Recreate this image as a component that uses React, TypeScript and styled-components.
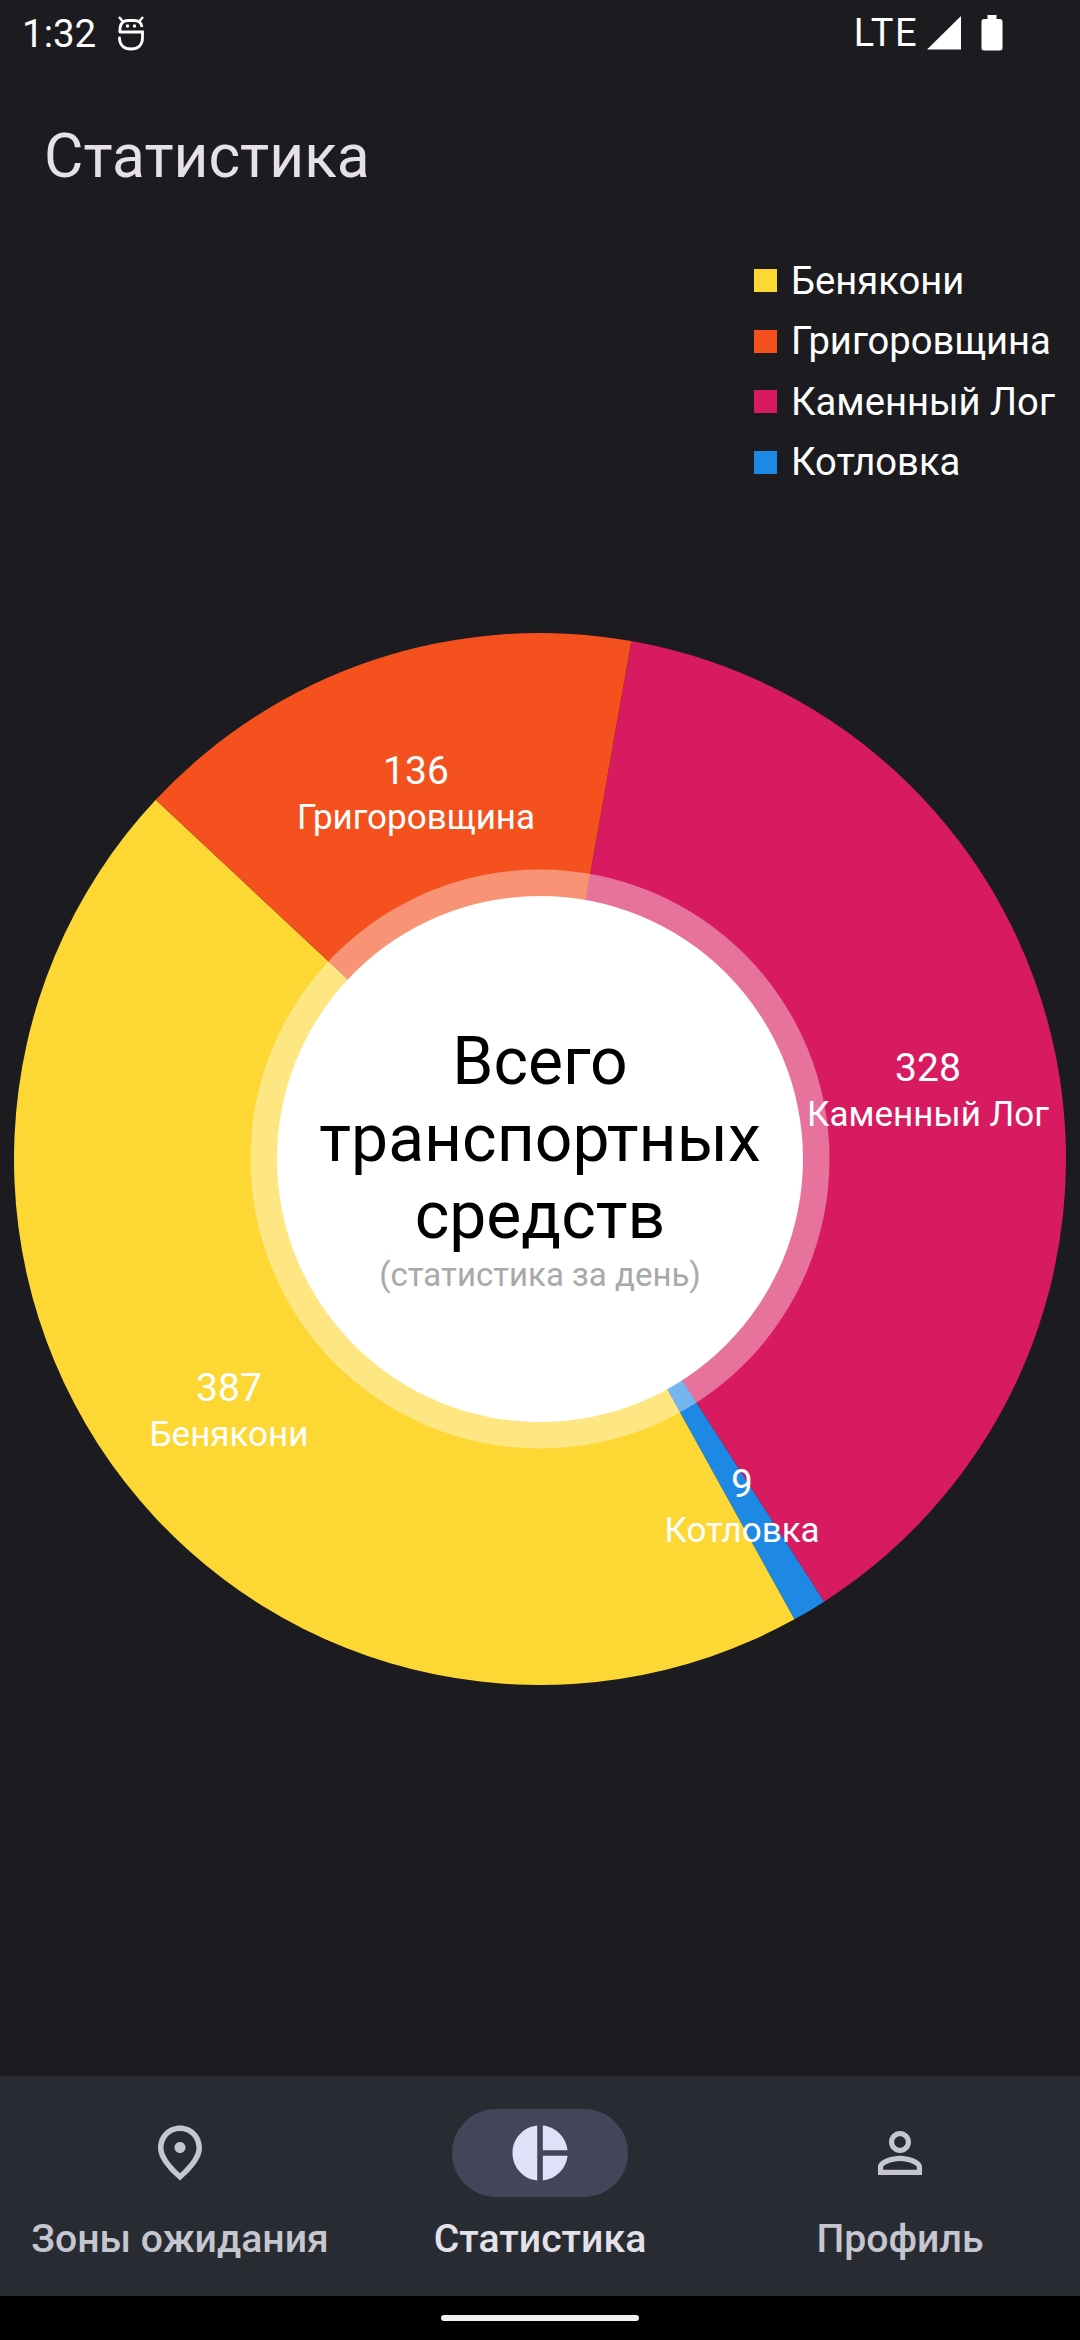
import React from "react";
import { createGlobalStyle, styled } from "styled-components";

type Slice = {
  name: string;
  value: number;
  color: string;
  labelX: number;
  labelY: number;
};

// order follows the chart, clockwise from the top boundary of Каменный Лог
const SLICES: Slice[] = [
  { name: "Каменный Лог", value: 328, color: "#d81b60", labelX: 914, labelY: 412 },
  { name: "Котловка", value: 9, color: "#1e88e5", labelX: 728, labelY: 828 },
  { name: "Бенякони", value: 387, color: "#fdd835", labelX: 215, labelY: 732 },
  { name: "Григоровщина", value: 136, color: "#f4511e", labelX: 402, labelY: 115 },
];

const LEGEND = [SLICES[2], SLICES[3], SLICES[0], SLICES[1]];

const CHART_R = 526;
const START_ANGLE = 10;

function point(angle: number, r: number) {
  const rad = (angle * Math.PI) / 180;
  return `${CHART_R + r * Math.sin(rad)} ${CHART_R - r * Math.cos(rad)}`;
}

function slicePaths() {
  const total = SLICES.reduce((sum, s) => sum + s.value, 0);
  let angle = START_ANGLE;
  return SLICES.map((s) => {
    const sweep = (s.value / total) * 360;
    const end = angle + sweep;
    const d = `M${CHART_R} ${CHART_R} L${point(angle, CHART_R)} A${CHART_R} ${CHART_R} 0 ${
      sweep > 180 ? 1 : 0
    } 1 ${point(end, CHART_R)} Z`;
    angle = end;
    return { d, color: s.color, name: s.name };
  });
}

function App() {
  return (
    <Screen>
      <GlobalStyle />
      <StatusBar>
        <StatusGroup>
          <Clock>1:32</Clock>
          <svg width="30" height="36" viewBox="0 0 30 36" fill="none" stroke="#fff" strokeWidth="2.8">
            <path d="M3.500 23C3.500 30 8 34 15 34C22 34 26.500 30 26.500 23V17H4" strokeLinecap="round" />
            <path d="M4 17C3.500 10 6 5.500 12 5.500H18C23 5.500 25.500 8 26 12" />
            <path d="M3 2L6.500 6M27 2L23.500 6" strokeWidth="2.4" />
            <circle cx="11.500" cy="11" r="1.700" fill="#fff" stroke="none" />
            <circle cx="18.500" cy="11" r="1.700" fill="#fff" stroke="none" />
          </svg>
        </StatusGroup>
        <StatusGroup>
          <Network>LTE</Network>
          <svg width="34" height="34" viewBox="0 0 34 34">
            <path d="M0 33.500L34 0V33.500Z" fill="#fff" />
          </svg>
          <svg width="22" height="36" viewBox="0 0 22 36">
            <path
              d="M6.500 0H15.500V4H19C20.600 4 21.500 5 21.500 6.500V33C21.500 34.700 20.600 35.500 19 35.500H3C1.400 35.500 0.500 34.700 0.500 33V6.500C0.500 5 1.400 4 3 4H6.500Z"
              fill="#fff"
            />
          </svg>
        </StatusGroup>
      </StatusBar>

      <Title>Статистика</Title>

      <Legend>
        {LEGEND.map((s) => (
          <LegendRow key={s.name}>
            <LegendSwatch $color={s.color} />
            {s.name}
          </LegendRow>
        ))}
      </Legend>

      <Chart>
        <svg width="1052" height="1052" viewBox="0 0 1052 1052">
          {slicePaths().map((p) => (
            <path key={p.name} d={p.d} fill={p.color} />
          ))}
          <circle cx={CHART_R} cy={CHART_R} r="289.500" fill="#fff" fillOpacity="0.39" />
          <circle cx={CHART_R} cy={CHART_R} r="263" fill="#fff" />
        </svg>
        {SLICES.map((s) => (
          <SliceLabel key={s.name} $x={s.labelX} $y={s.labelY}>
            <SliceValue>{s.value}</SliceValue>
            <SliceName>{s.name}</SliceName>
          </SliceLabel>
        ))}
        <CenterText>
          <CenterTitle>
            Всего
            <br />
            транспортных
            <br />
            средств
          </CenterTitle>
          <CenterHint>(статистика за день)</CenterHint>
        </CenterText>
      </Chart>

      <BottomNav>
        <NavItem>
          <NavIcon>
            <svg width="66" height="66" viewBox="0 0 24 24" fill="#c5c6d0">
              <path d="M12 12c-1.100 0-2-.9-2-2s.9-2 2-2 2 .9 2 2-.9 2-2 2zm6-1.800C18 6.570 15.350 4 12 4s-6 2.570-6 6.200c0 2.340 1.950 5.440 6 9.140 4.050-3.700 6-6.800 6-9.140zM12 2c4.200 0 8 3.220 8 8.200 0 3.320-2.670 7.250-8 11.800-5.330-4.550-8-8.480-8-11.800C4 5.220 7.800 2 12 2z" />
            </svg>
          </NavIcon>
          <NavLabel>Зоны ожидания</NavLabel>
        </NavItem>
        <NavItem>
          <NavIcon $active>
            <svg width="66" height="66" viewBox="0 0 24 24" fill="#dfe1f9">
              <path d="M11 2v20c-5.070-.5-9-4.790-9-10s3.930-9.500 9-10zm2.030 0v8.990H22c-.47-4.740-4.240-8.520-8.970-8.990zm0 11.010V22c4.740-.47 8.500-4.250 8.970-8.990h-8.970z" />
            </svg>
          </NavIcon>
          <NavLabel $active>Статистика</NavLabel>
        </NavItem>
        <NavItem>
          <NavIcon>
            <svg width="66" height="66" viewBox="0 0 24 24" fill="#c5c6d0">
              <path d="M12 5.900c1.160 0 2.100.94 2.100 2.100s-.94 2.100-2.100 2.100S9.900 9.160 9.900 8s.94-2.100 2.100-2.100m0 9c2.970 0 6.100 1.460 6.100 2.100v1.100H5.900V17c0-.64 3.130-2.100 6.100-2.100M12 4C9.790 4 8 5.790 8 8s1.790 4 4 4 4-1.790 4-4-1.790-4-4-4zm0 9c-2.670 0-8 1.340-8 4v3h16v-3c0-2.660-5.330-4-8-4z" />
            </svg>
          </NavIcon>
          <NavLabel>Профиль</NavLabel>
        </NavItem>
      </BottomNav>

      <GestureBar>
        <GestureHandle />
      </GestureBar>
    </Screen>
  );
}

export default App;

const GlobalStyle = createGlobalStyle`
  html, body {
    margin: 0;
    padding: 0;
    background: #1c1b1f;
  }
  body {
    font-family: Roboto, "Noto Sans", sans-serif;
  }
`;

const Screen = styled.div`
  width: 1080px;
  height: 2340px;
  display: flex;
  flex-direction: column;
  background: #1c1b1f;
  overflow: hidden;
`;

const StatusBar = styled.div`
  height: 66px;
  padding: 0 77px 0 22px;
  display: flex;
  align-items: center;
  justify-content: space-between;
  color: #fff;
`;

const StatusGroup = styled.div`
  display: flex;
  align-items: center;
  gap: 20px;
`;

const Clock = styled.span`
  font-size: 38.500px;
`;

const Network = styled.span`
  font-size: 38px;
  letter-spacing: 1.500px;
  margin-top: -1px;
  margin-right: -11px;
`;

const Title = styled.h1`
  margin: 59px 0 0 44px;
  font-size: 60.500px;
  line-height: 64px;
  font-weight: 400;
  color: #e6e1e5;
`;

const Legend = styled.div`
  margin: 69px 0 0 754px;
  display: flex;
  flex-direction: column;
  gap: 15px;
`;

const LegendRow = styled.div`
  height: 45.500px;
  display: flex;
  align-items: center;
  gap: 14px;
  font-size: 38.200px;
  color: #fff;
  white-space: nowrap;
`;

const LegendSwatch = styled.span<{ $color: string }>`
  width: 23px;
  height: 23px;
  background: ${(p) => p.$color};
`;

const Chart = styled.div`
  position: relative;
  width: 1052px;
  height: 1052px;
  margin: 148px 0 0 14px;

  svg {
    display: block;
  }
`;

const SliceLabel = styled.div<{ $x: number; $y: number }>`
  position: absolute;
  left: ${(p) => p.$x}px;
  top: ${(p) => p.$y}px;
  transform: translateX(-50%);
  display: flex;
  flex-direction: column;
  align-items: center;
  color: #fff;
  white-space: nowrap;
`;

const SliceValue = styled.span`
  font-size: 39px;
  line-height: 46px;
`;

const SliceName = styled.span`
  font-size: 35px;
  line-height: 48px;
`;

const CenterText = styled.div`
  position: absolute;
  left: 0;
  right: 0;
  top: 390px;
  text-align: center;
`;

const CenterTitle = styled.div`
  font-size: 66px;
  line-height: 77px;
  color: #000;
`;

const CenterHint = styled.div`
  margin-top: 1px;
  font-size: 33px;
  line-height: 39px;
  color: #a9a9a9;
`;

const BottomNav = styled.nav`
  margin-top: auto;
  height: 220px;
  flex: none;
  display: grid;
  grid-template-columns: repeat(3, 1fr);
  background: #292b33;
`;

const NavItem = styled.div`
  display: flex;
  flex-direction: column;
  align-items: center;
  padding-top: 33px;
`;

const NavIcon = styled.div<{ $active?: boolean }>`
  width: 176px;
  height: 88px;
  display: flex;
  align-items: center;
  justify-content: center;
  border-radius: 44px;
  background: ${(p) => (p.$active ? "#434659" : "transparent")};
`;

const NavLabel = styled.span<{ $active?: boolean }>`
  margin-top: 21px;
  font-size: 39.200px;
  line-height: 42px;
  font-weight: 500;
  white-space: nowrap;
  color: ${(p) => (p.$active ? "#e3e1e9" : "#c5c6d0")};
`;

const GestureBar = styled.div`
  height: 44px;
  flex: none;
  display: flex;
  align-items: center;
  justify-content: center;
  background: #000;
`;

const GestureHandle = styled.div`
  width: 198px;
  height: 6px;
  border-radius: 3px;
  background: #f0f0f0;
`;
